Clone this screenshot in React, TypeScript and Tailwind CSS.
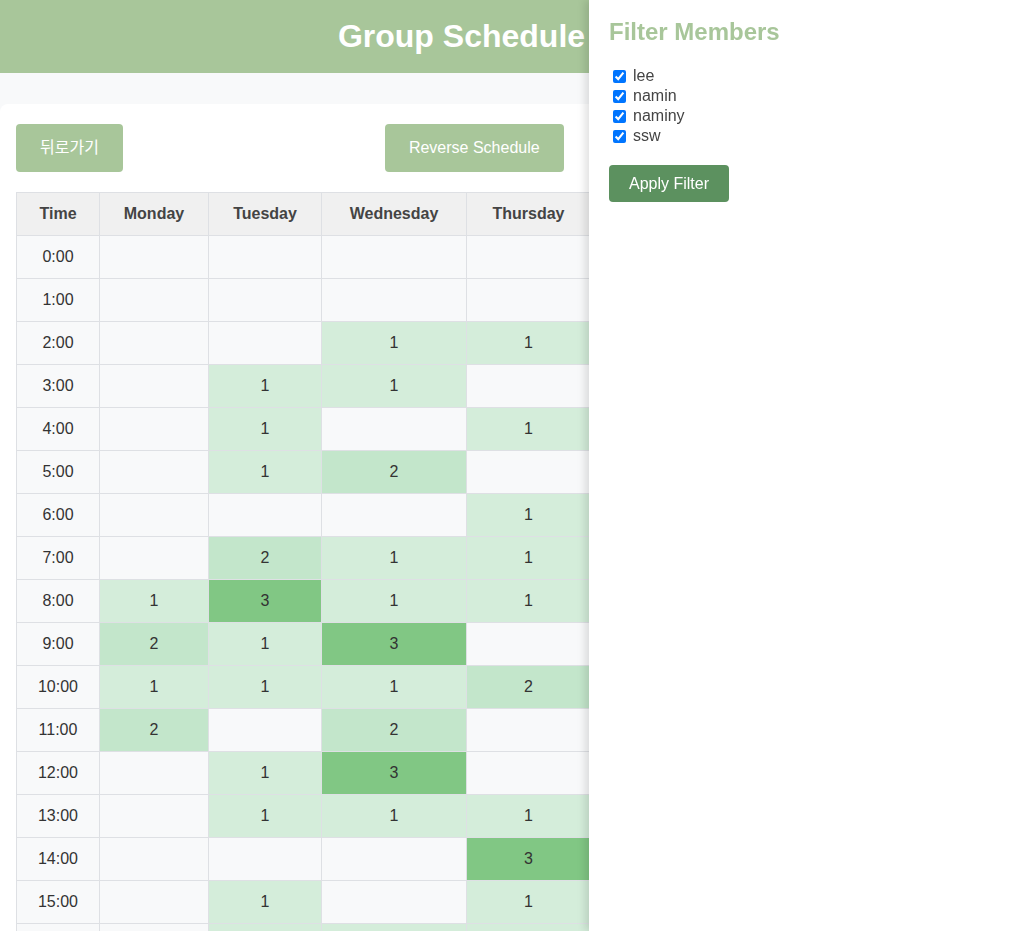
const members = ['lee', 'namin', 'naminy', 'ssw']

const days = ['Monday', 'Tuesday', 'Wednesday', 'Thursday', 'Friday', 'Saturday', 'Sunday']
const colWidths = ['w-[109px]', 'w-[113px]', 'w-[145px]', 'w-[124px]', 'w-[100px]', 'w-[112px]', 'w-[100px]']

// counts per hour: Mon..Sun
const schedule: number[][] = [
  [0, 0, 0, 0, 0, 0, 0],
  [0, 0, 0, 0, 0, 0, 0],
  [0, 0, 1, 1, 0, 0, 0],
  [0, 1, 1, 0, 0, 0, 0],
  [0, 1, 0, 1, 0, 0, 0],
  [0, 1, 2, 0, 0, 0, 0],
  [0, 0, 0, 1, 0, 0, 0],
  [0, 2, 1, 1, 0, 0, 0],
  [1, 3, 1, 1, 0, 0, 0],
  [2, 1, 3, 0, 0, 0, 0],
  [1, 1, 1, 2, 0, 0, 0],
  [2, 0, 2, 0, 0, 0, 0],
  [0, 1, 3, 0, 0, 0, 0],
  [0, 1, 1, 1, 0, 0, 0],
  [0, 0, 0, 3, 0, 0, 0],
  [0, 1, 0, 1, 0, 0, 0],
  [0, 1, 1, 1, 0, 0, 0],
  [0, 0, 0, 0, 0, 0, 0],
]

function cellClass(n: number) {
  if (n >= 3) return 'bg-[#81c784]'
  if (n === 2) return 'bg-[#c3e6cb]'
  if (n === 1) return 'bg-[#d4edda]'
  return 'bg-[#f8f9fa]'
}

export default function App() {
  return (
    <div className="h-[931px] overflow-hidden bg-[#f8f9fa] font-['Liberation_Sans','Noto_Sans_CJK_KR',sans-serif] text-[#333]">
      {/* Header */}
      <header className="h-[73px] bg-[#a8c69a] flex items-center justify-center pr-[91px] pb-[2px]">
        <h1 className="text-[32px] font-bold text-white">Group Schedule</h1>
      </header>

      {/* Main card */}
      <main className="mt-[31px] bg-white rounded-tl-lg px-4 pt-5">
        <div className="flex items-center">
          <button className="h-12 px-6 bg-[#a8c69a] text-white text-base rounded">뒤로가기</button>
          <button className="h-12 px-6 ml-[262px] bg-[#a8c69a] text-white text-base rounded">Reverse Schedule</button>
        </div>

        <table className="mt-5 border-collapse text-base text-center">
          <thead>
            <tr className="bg-[#f0f0f0] text-[#444]">
              <th className="w-[83px] h-[43px] border border-[#dee0e4] font-bold">Time</th>
              {days.map((d, i) => (
                <th key={d} className={`${colWidths[i]} h-[43px] border border-[#dee0e4] font-bold`}>
                  {d}
                </th>
              ))}
            </tr>
          </thead>
          <tbody>
            {schedule.map((row, h) => (
              <tr key={h}>
                <td className="h-[43px] border border-[#dee0e4] bg-[#f8f9fa]">{h}:00</td>
                {row.map((n, i) => (
                  <td key={i} className={`h-[43px] border border-[#dee0e4] ${cellClass(n)}`}>
                    {n > 0 ? n : ''}
                  </td>
                ))}
              </tr>
            ))}
          </tbody>
        </table>
      </main>

      {/* Filter sidebar */}
      <aside className="fixed top-0 right-0 h-full w-[425px] bg-white shadow-[-4px_0_8px_rgba(0,0,0,0.12)] px-5 pt-4">
        <h2 className="text-2xl font-bold text-[#a8c69a]">Filter Members</h2>
        <div className="mt-[18px] flex flex-col pl-[4px]">
          {members.map((m) => (
            <label key={m} className="flex items-center h-5 text-base text-[#444]">
              <input type="checkbox" defaultChecked className="w-[13px] h-[13px] mr-[7px] accent-[#0075ff]" />
              {m}
            </label>
          ))}
        </div>
        <button className="mt-[19px] h-[37px] px-5 bg-[#5c915f] text-white text-base rounded">Apply Filter</button>
      </aside>
    </div>
  )
}
